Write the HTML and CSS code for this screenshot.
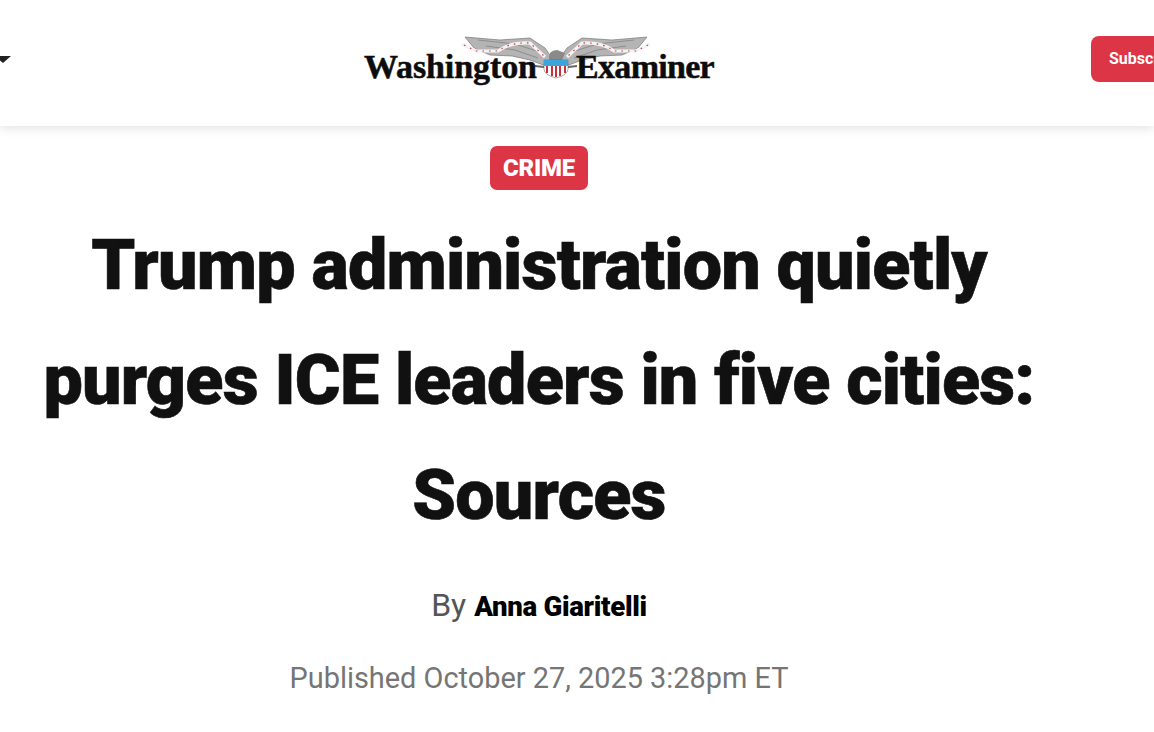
FILE: index.html
```html
<!DOCTYPE html>
<html lang="en">
<head>
<meta charset="utf-8">
<title>Trump administration quietly purges ICE leaders in five cities: Sources</title>
<link rel="stylesheet" href="styles.css">
</head>
<body>
<header class="site-header">
  <span class="caret"></span>
  <a class="logo" href="#">
    <svg class="eagle" width="190" height="50" viewBox="460 35 190 50">
      <g fill="#b4b4b4" stroke="#777" stroke-width=".7">
        <path d="M465 37 L500 40 L530 38 L545 48 L552 58 L546 66 L530 60 L512 56 L490 55 L474 48 Z"/>
        <path d="M647 37 L612 40 L582 38 L567 48 L560 58 L566 66 L582 60 L600 56 L622 55 L638 48 Z"/>
      </g>
      <path d="M478 40 L515 44 L540 52 M486 46 L515 50 L538 58 M634 40 L597 44 L572 52 M626 46 L597 50 L574 58" fill="none" stroke="#7d7d7d" stroke-width=".7"/>
      <path d="M462 44 L476 51 L498 51 Q510 42 530 43 L545 57 M650 44 L636 51 L614 51 Q602 42 582 43 L567 57" fill="none" stroke="#f6f2f2" stroke-width="3.2"/>
      <path d="M464 45 L476 51 L498 51 Q510 42 530 43 L545 57 M648 45 L636 51 L614 51 Q602 42 582 43 L567 57" fill="none" stroke="#c2414c" stroke-width="1.2" stroke-dasharray="1.6 5"/>
      <path d="M549 60 Q548 50 557 50 L565 53 L562 60 Z" fill="#8a8a8a"/>
      <path d="M544 60 H568 V69 Q568 75 556 78 Q544 75 544 69 Z" fill="#fff" stroke="#555" stroke-width=".5"/>
      <path d="M544 60 H568 V66 H544 Z" fill="#3ba4dc"/>
      <path d="M547 66 V73 M552 66 V76 M556 66 V77 M560 66 V76 M565 66 V73" stroke="#c8303c" stroke-width="2"/>
      <path d="M535 66 L544 67 M568 67 L577 66" stroke="#666" stroke-width="2"/>
    </svg>
    <span class="logo-word">Washington</span>
    <span class="logo-word logo-word-tight">Examiner</span>
  </a>
  <a class="subscribe" href="#">Subscribe</a>
</header>
<main class="article-head">
  <a class="tag" href="#">CRIME</a>
  <h1 class="headline">Trump administration quietly purges ICE leaders in five cities: Sources</h1>
  <p class="byline">By <a href="#">Anna Giaritelli</a></p>
  <p class="published">Published October 27, 2025 3:28pm ET</p>
</main>
</body>
</html>
```
FILE: styles.css
```css
* { box-sizing: border-box; }
html, body { margin: 0; height: 100%; overflow: hidden; background: #fff; }
body { font-family: Roboto, "Liberation Sans", sans-serif; color: #111; width: 1154px; }
a { text-decoration: none; color: inherit; }

.site-header {
  height: 126px;
  display: flex;
  align-items: center;
  background: #fff;
  box-shadow: 0 2px 10px rgba(0, 0, 0, .12);
}
.caret {
  flex: none;
  width: 0; height: 0;
  margin: -8px 0 0 -5px;
  border-left: 8px solid transparent;
  border-right: 8px solid transparent;
  border-top: 7px solid #222;
}
.logo {
  flex: none;
  margin-left: 353px;
  width: 350px;
  height: 60px;
  display: flex;
  align-items: flex-end;
  justify-content: space-between;
  font-family: "Liberation Serif", serif;
  font-weight: 700;
  color: #0c0c0c;
  position: relative;
}
.logo-word {
  font-size: 34px;
  line-height: 44px;
  letter-spacing: -.1px;
  -webkit-text-stroke: .5px #0c0c0c;
  position: relative;
  top: -4px;
}
.logo-word-tight { letter-spacing: -.7px; }
.eagle { position: absolute; left: 96px; top: 2px; }
.subscribe {
  flex: none;
  margin-left: 377px;
  width: 110px;
  height: 46px;
  margin-top: -8px;
  padding-left: 18px;
  line-height: 46px;
  background: #dc3545;
  color: #fff;
  font-size: 16px;
  font-weight: 700;
  border-radius: 8px;
  white-space: nowrap;
}

.article-head {
  width: 1078px;
  display: flex;
  flex-direction: column;
  align-items: center;
  text-align: center;
  padding-top: 20px;
}
.tag {
  height: 44px;
  width: 98px;
  line-height: 44px;
  background: #dc3545;
  color: #fff;
  font-size: 24px;
  font-weight: 900;
  border-radius: 7px;
  letter-spacing: -.2px;
}
.headline {
  margin: 18px 0 0;
  width: 1020px;
  font-size: 70px;
  line-height: 115px;
  font-weight: 900;
  color: #111;
  letter-spacing: -.8px;
  -webkit-text-stroke: .6px #111;
}
.byline {
  margin: 32px 0 0;
  font-size: 32px;
  line-height: 40px;
  color: #555;
}
.byline a { color: #000; font-weight: 900; font-size: 27.6px; letter-spacing: -.3px; }
.published {
  margin: 31px 0 0;
  font-size: 28.9px;
  line-height: 40px;
  color: #757575;
}
```
